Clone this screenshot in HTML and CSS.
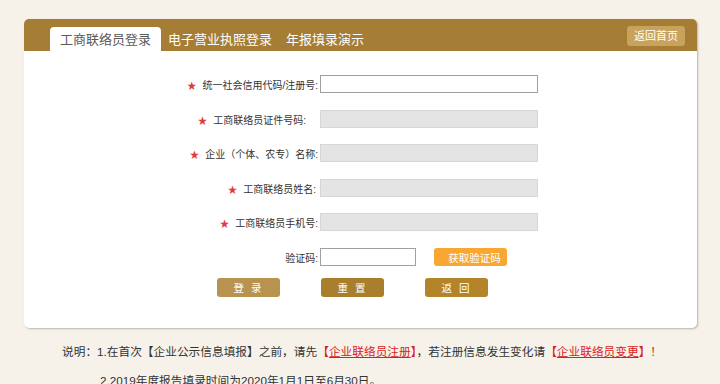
FILE: index.html
```html
<!DOCTYPE html>
<html lang="zh-CN">
<head>
    <meta charset="UTF-8">
    <meta name="viewport" content="width=device-width, initial-scale=1.0">
    <title>工商联络员登录</title>
    <link rel="stylesheet" href="styles.css">
</head>
<body>
    <div class="login-box">
        <div class="login-head">
            <div class="tabs">
                <span class="tab active">工商联络员登录</span>
                <span class="tab">电子营业执照登录</span>
                <span class="tab">年报填录演示</span>
            </div>
            <a href="#" class="back-home">返回首页</a>
        </div>

        <form class="login-form">
            <div class="form-row">
                <label class="form-label"><i class="star">★</i>统一社会信用代码/注册号:</label>
                <input type="text" class="form-input">
            </div>
            <div class="form-row">
                <label class="form-label label-short"><i class="star">★</i>工商联络员证件号码:</label>
                <input type="text" class="form-input" disabled>
            </div>
            <div class="form-row">
                <label class="form-label"><i class="star">★</i>企业（个体、农专）名称:</label>
                <input type="text" class="form-input" disabled>
            </div>
            <div class="form-row">
                <label class="form-label label-name"><i class="star">★</i>工商联络员姓名:</label>
                <input type="text" class="form-input" disabled>
            </div>
            <div class="form-row">
                <label class="form-label"><i class="star">★</i>工商联络员手机号:</label>
                <input type="text" class="form-input" disabled>
            </div>
            <div class="form-row">
                <label class="form-label">验证码:</label>
                <input type="text" class="form-input code-input">
                <button type="button" class="code-btn">获取验证码</button>
            </div>
            <div class="btn-row">
                <button type="button" class="btn btn-login">登 录</button>
                <button type="reset" class="btn btn-reset">重 置</button>
                <button type="button" class="btn btn-back">返 回</button>
            </div>
        </form>
    </div>

    <div class="notes">
        <p>说明：1.在首次【企业公示信息填报】之前，请先<span class="red">【<a href="#">企业联络员注册</a>】</span>，若注册信息发生变化请<span class="red">【<a href="#">企业联络员变更</a>】！</span></p>
        <p class="indent">2.2019年度报告填录时间为2020年1月1日至6月30日。</p>
    </div>
</body>
</html>
```

FILE: styles.css
```css
* {
    margin: 0;
    padding: 0;
    box-sizing: border-box;
}

body {
    font-family: 'Liberation Sans', 'Noto Sans CJK SC', sans-serif;
    background: #f6f2ea;
    color: #333;
    overflow: hidden;
}

.login-box {
    width: 673px;
    margin: 19px 0 0 24px;
    background: #ffffff;
    border-radius: 5px;
    box-shadow: 1px 1px 2px rgba(0, 0, 0, 0.25);
    overflow: hidden;
}

.login-head {
    height: 32px;
    background: #a57d35;
    display: flex;
    align-items: flex-end;
    justify-content: space-between;
    padding: 0 12px 0 26px;
}

.tabs {
    display: flex;
    align-items: flex-end;
}

.tab {
    height: 24px;
    line-height: 24px;
    padding: 0 7px;
    font-size: 13px;
    color: #ffffff;
    font-family: 'Noto Sans CJK SC', sans-serif;
}

.tab.active {
    background: #ffffff;
    color: #5a5a5a;
    padding: 0 10px;
    border-radius: 4px 4px 0 0;
}

.back-home {
    align-self: center;
    margin-top: 1px;
    width: 58px;
    height: 20px;
    line-height: 20px;
    text-align: center;
    font-size: 11px;
    color: #ffffff;
    background: #c8a35e;
    border-radius: 3px;
    text-decoration: none;
}

.login-form {
    padding: 24px 0 31px;
}

.form-row {
    display: flex;
    align-items: center;
    height: 18px;
    margin-bottom: 17px;
}

.form-row:nth-child(2),
.form-row:nth-child(4) {
    margin-bottom: 16px;
}

.form-label {
    width: 296px;
    padding-right: 2px;
    text-align: right;
    font-size: 10px;
    color: #333;
}

.label-short {
    padding-right: 14px;
}

.label-name {
    padding-right: 4px;
}

.star {
    font-style: normal;
    color: #e03b3b;
    font-size: 9.5px;
    margin-right: 6px;
}

.form-input {
    width: 218px;
    height: 18px;
    border: 1px solid #a0a0a0;
    background: #ffffff;
    font-size: 11px;
}

.form-input:disabled {
    background: #e4e4e4;
    border-color: #d6d6d6;
}

.code-input {
    width: 96px;
}

.code-btn {
    margin-left: 18px;
    width: 73px;
    height: 18px;
    padding-left: 8px;
    border: none;
    border-radius: 3px;
    background: #f8a832;
    color: #ffffff;
    font-size: 10.5px;
    font-family: inherit;
}

.btn-row {
    display: flex;
    gap: 41px;
    padding-left: 193px;
    margin-top: -5px;
}

.btn {
    width: 63px;
    height: 19px;
    border: none;
    border-radius: 3px;
    color: #ffffff;
    font-size: 10.5px;
    font-family: inherit;
    letter-spacing: 2px;
}

.btn-login {
    background: #b7934f;
}

.btn-reset {
    background: #a97f2e;
}

.btn-back {
    background: #b4842a;
}

.notes {
    padding: 9px 0 0 62px;
    font-size: 11.7px;
    line-height: 29px;
    color: #333;
}

.notes .indent {
    padding-left: 38px;
}

.red {
    color: #d82020;
}

.red a {
    color: #d82020;
}
```
